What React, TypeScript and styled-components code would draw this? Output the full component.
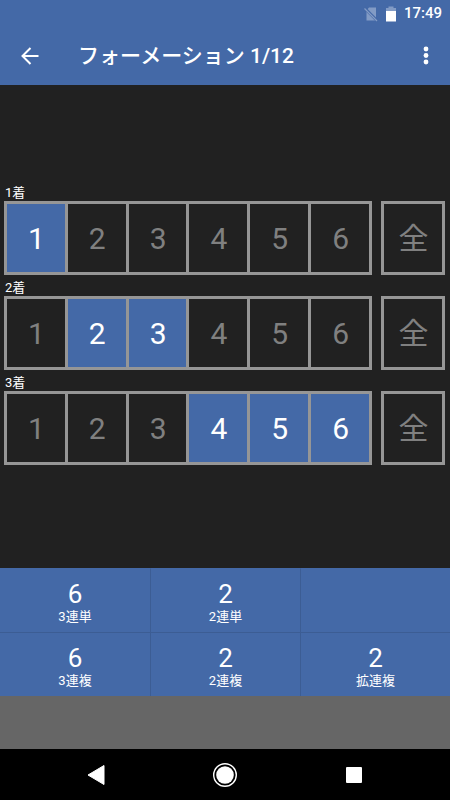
import React, { useState } from "react";
import styled, { createGlobalStyle } from "styled-components";

const blue = "#4469a7";
const line = "#969696";

const GlobalStyle = createGlobalStyle`
  *, *::before, *::after { box-sizing: border-box; }
  body { margin: 0; background: #212121; }
  button { font: inherit; color: inherit; border: 0; padding: 0; margin: 0; background: none; cursor: pointer; }
`;

const Screen = styled.div`
  display: flex;
  flex-direction: column;
  min-height: 100vh;
  background: #212121;
  color: #fff;
  font-family: Roboto, "Noto Sans CJK JP", sans-serif;
`;

const StatusBar = styled.div`
  display: flex;
  align-items: center;
  justify-content: flex-end;
  height: 27px;
  padding-right: 8px;
  background: ${blue};
  font-size: 15px;
  font-weight: 500;
  line-height: 27px;
`;

const StatusIcon = styled.svg`
  display: block;
  width: 14px;
  height: 16px;
  margin-right: 6px;
`;

const Toolbar = styled.header`
  display: flex;
  align-items: center;
  height: 58px;
  padding: 0 8px 0 14px;
  background: ${blue};
`;

const IconButton = styled.button`
  display: grid;
  place-items: center;
  width: 32px;
  height: 40px;
`;

const Title = styled.h1`
  flex: 1;
  margin: 0 0 0 32px;
  font-size: 21px;
  font-weight: 500;
  line-height: 32px;
`;

const Board = styled.main`
  flex: 1;
  display: flex;
  flex-direction: column;
  justify-content: center;
  padding: 0 5px 2px 4px;
`;

const PlaceRow = styled.section`
  padding-bottom: 3px;
`;

const PlaceLabel = styled.h2`
  margin: 0;
  padding: 2px 0 0 1px;
  font-size: 13px;
  font-weight: 400;
  line-height: 16px;
`;

const Cells = styled.div`
  display: flex;
  gap: 9px;
  height: 74px;
`;

const NumberGrid = styled.div`
  flex: 1;
  display: grid;
  grid-template-columns: repeat(6, 1fr);
  gap: 3px;
  padding: 3px;
  background: ${line};
`;

const AllFrame = styled.div`
  display: grid;
  width: 64px;
  padding: 3px;
  background: ${line};
`;

const Cell = styled.button<{ $selected?: boolean }>`
  && {
    padding: 2px 0 0 1px;
    font-size: 30px;
    line-height: 36px;
    color: ${(p) => (p.$selected ? "#fff" : "#808080")};
    background: ${(p) => (p.$selected ? blue : "#212121")};
  }
`;

const Totals = styled.div`
  display: grid;
  grid-template-columns: repeat(3, 1fr);
  background: ${blue};
`;

const Total = styled.button`
  && {
    display: flex;
    flex-direction: column;
    align-items: center;
    height: 64px;
    padding-top: 10px;
    border-left: 1px solid #3c5d94;
    border-top: 1px solid #3c5d94;
  }
  &&:nth-child(3n + 1) { border-left: 0; }
  &&:nth-child(-n + 3) { border-top-color: ${blue}; }
`;

const Count = styled.span`
  font-size: 26px;
  line-height: 30px;
`;

const BetName = styled.span`
  font-size: 13px;
  line-height: 16px;
`;

const Banner = styled.div`
  height: 53px;
  background: #666;
`;

const NavBar = styled.nav`
  display: flex;
  align-items: center;
  justify-content: center;
  gap: 97px;
  height: 51px;
  background: #000;
`;

const places = [
  { label: "1着", initial: [1] },
  { label: "2着", initial: [2, 3] },
  { label: "3着", initial: [4, 5, 6] },
];

const bets = [
  { name: "3連単", count: 6 },
  { name: "2連単", count: 2 },
  { name: "", count: null },
  { name: "3連複", count: 6 },
  { name: "2連複", count: 2 },
  { name: "拡連複", count: 2 },
];

const numbers = [1, 2, 3, 4, 5, 6];

export default function App() {
  const [picks, setPicks] = useState<number[][]>(places.map((p) => p.initial));

  const update = (row: number, next: number[]) =>
    setPicks((all) => all.map((r, i) => (i === row ? next : r)));

  const toggle = (row: number, n: number) =>
    update(row, picks[row].includes(n) ? picks[row].filter((v) => v !== n) : [...picks[row], n]);

  return (
    <Screen>
      <GlobalStyle />
      <StatusBar>
        <StatusIcon viewBox="0 0 14 16" aria-hidden="true">
          <path d="M5 1.5h7v13H2.5v-10z" fill="#829bc5" />
          <path d="M0 1.5 13.5 15" stroke={blue} strokeWidth="3" />
          <path d="M0.5 2.5 13 15" stroke="#829bc5" strokeWidth="1.2" />
        </StatusIcon>
        <StatusIcon viewBox="0 0 14 16" aria-hidden="true">
          <path d="M4.5 0.5h5v1.5H12v4H2V2h2.5z" fill="#829bc5" />
          <path d="M2 5h10v10.5H2z" fill="#fff" />
        </StatusIcon>
        <span>17:49</span>
      </StatusBar>
      <Toolbar>
        <IconButton type="button" aria-label="戻る">
          <svg width="20" height="20" viewBox="0 0 20 20" fill="none" stroke="#fff" strokeWidth="2">
            <path d="M18.5 10H2.5M10.5 2 2.5 10l8 8" />
          </svg>
        </IconButton>
        <Title>フォーメーション 1/12</Title>
        <IconButton type="button" aria-label="メニュー">
          <svg width="6" height="20" viewBox="0 0 6 20" fill="#fff">
            <circle cx="3" cy="3" r="2.4" />
            <circle cx="3" cy="9.5" r="2.4" />
            <circle cx="3" cy="16" r="2.4" />
          </svg>
        </IconButton>
      </Toolbar>
      <Board>
        {places.map((place, row) => (
          <PlaceRow key={place.label} aria-label={place.label}>
            <PlaceLabel>{place.label}</PlaceLabel>
            <Cells>
              <NumberGrid>
                {numbers.map((n) => (
                  <Cell
                    key={n}
                    type="button"
                    $selected={picks[row].includes(n)}
                    aria-pressed={picks[row].includes(n)}
                    onClick={() => toggle(row, n)}
                  >
                    {n}
                  </Cell>
                ))}
              </NumberGrid>
              <AllFrame>
                <Cell type="button" onClick={() => update(row, numbers)}>
                  全
                </Cell>
              </AllFrame>
            </Cells>
          </PlaceRow>
        ))}
      </Board>
      <Totals>
        {bets.map((bet, i) => (
          <Total key={i} type="button" disabled={bet.count === null}>
            <Count>{bet.count}</Count>
            <BetName>{bet.name}</BetName>
          </Total>
        ))}
      </Totals>
      <Banner />
      <NavBar>
        <IconButton type="button" aria-label="Back">
          <svg width="20" height="22" viewBox="0 0 20 22" fill="#fff" stroke="#fff" strokeLinejoin="round">
            <path d="M2 11 18 1.5v19z" />
          </svg>
        </IconButton>
        <IconButton type="button" aria-label="Home">
          <svg width="26" height="26" viewBox="0 0 26 26">
            <circle cx="13" cy="13" r="11.3" fill="none" stroke="#fff" strokeWidth="1.4" />
            <circle cx="13" cy="13" r="8.8" fill="#fff" />
          </svg>
        </IconButton>
        <IconButton type="button" aria-label="Overview">
          <svg width="16" height="16" viewBox="0 0 16 16">
            <rect width="16" height="16" rx="1" fill="#fff" />
          </svg>
        </IconButton>
      </NavBar>
    </Screen>
  );
}
